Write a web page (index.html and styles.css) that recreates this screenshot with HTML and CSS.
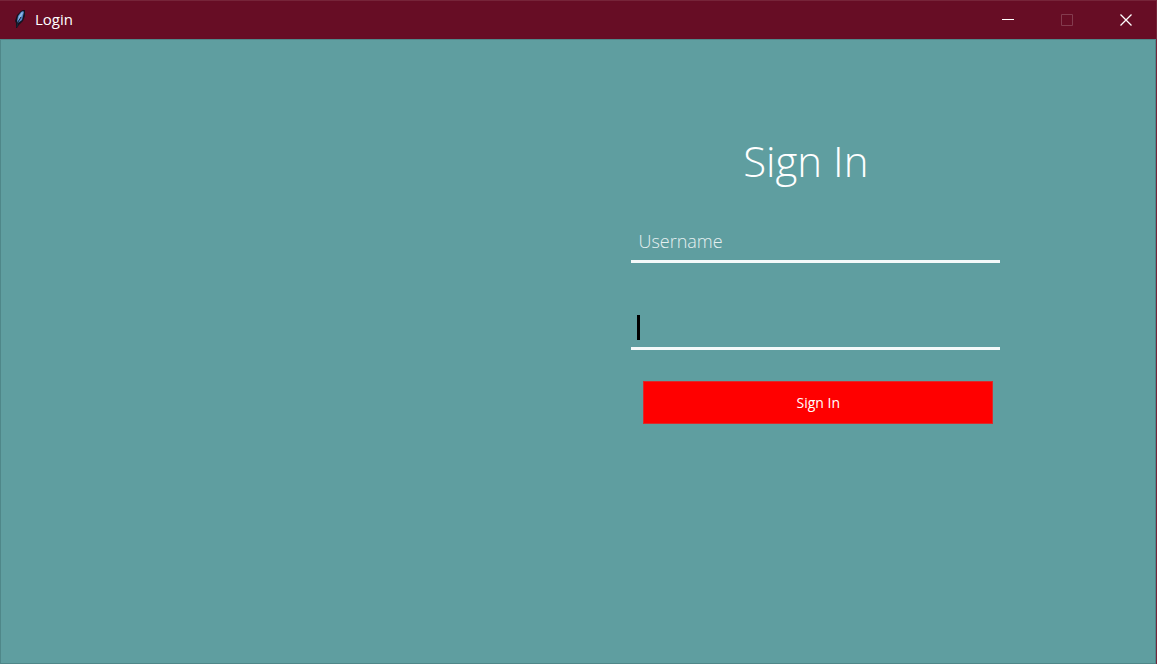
FILE: index.html
```html
<!DOCTYPE html>
<html lang="en">
<head>
<meta charset="utf-8">
<meta name="viewport" content="width=device-width, initial-scale=1">
<title>Login</title>
<link rel="stylesheet" href="styles.css">
</head>
<body>
<div class="window">
  <header class="titlebar">
    <svg class="feather" viewBox="0 0 12 20" aria-hidden="true">
      <path d="M9 1 L11 1 L11 7 L9 12 L5 16 L3 19 L2 19 L2 14 L1 12 L3 6 L7 2 Z" fill="#14141f"/>
      <path d="M9 2 L10 3 L9 7 L8 11 L4 14 L3 12 L4 7 L7 3 Z" fill="#4f83c4"/>
      <path d="M8 3 L9 4 L6 10 L4 11 L5 7 Z" fill="#8fbbe6"/>
      <path d="M7 8 L4 13 L3 18" fill="none" stroke="#182238"/>
    </svg>
    <span class="caption">Login</span>
    <div class="controls">
      <button class="control" type="button" aria-label="Minimize">
        <svg class="glyph" viewBox="0 0 12 12"><path d="M0 5.5H12"/></svg>
      </button>
      <button class="control" type="button" aria-label="Maximize" disabled>
        <svg class="glyph" viewBox="0 0 12 12"><path d="M.5 .5H11.5V11.5H.5Z"/></svg>
      </button>
      <button class="control" type="button" aria-label="Close">
        <svg class="glyph close" viewBox="0 0 12 12"><path d="M.5 .5L11.5 11.5M11.5 .5L.5 11.5"/></svg>
      </button>
    </div>
  </header>
  <main class="client">
    <form class="login">
      <h1 class="heading">Sign In</h1>
      <div class="field">
        <input class="entry" type="text" aria-label="Username" value="Username">
      </div>
      <div class="field">
        <input class="entry" type="password" aria-label="Password">
        <span class="caret"></span>
      </div>
      <button class="submit" type="button">Sign In</button>
    </form>
  </main>
</div>
</body>
</html>
```
FILE: styles.css
```css
* {
  box-sizing: border-box;
}

body {
  margin: 0;
  font-family: "Open Sans", "Noto Sans", sans-serif;
  color: #fff;
}

.window {
  display: flex;
  flex-direction: column;
  min-height: 100vh;
  border-top: 1px solid #762439;
  border-right: 1px solid #762439;
  background: #670d25;
}

.titlebar {
  display: flex;
  align-items: center;
  height: 38px;
  padding: 0 1px 2px 14px;
}

.feather {
  width: 12px;
  height: 20px;
}

.caption {
  margin-left: 9px;
  font-size: 15px;
  line-height: 20px;
}

.controls {
  display: flex;
  align-self: stretch;
  margin-left: auto;
}

.control {
  display: grid;
  place-items: center;
  width: 59px;
  padding: 2px 0 0;
  border: 0;
  background: transparent;
  color: #fff;
}

.control:disabled {
  color: #843b4e;
}

.glyph {
  width: 12px;
  height: 12px;
  fill: none;
  stroke: currentColor;
  overflow: visible;
}

.close {
  stroke-width: 1.3;
}

.client {
  flex: 1;
  display: grid;
  grid-template-columns: 631fr 369fr 155fr;
  align-items: start;
  border: 1px solid #4f8789;
  background: #5f9ea0;
}

.login {
  grid-column: 2;
  display: flex;
  flex-direction: column;
  padding-top: 91px;
}

.heading {
  margin: 0 20px 32px 0;
  font-size: 42px;
  font-weight: 350;
  line-height: 60px;
  text-align: center;
}

.field {
  position: relative;
  height: 40px;
  margin-bottom: 47px;
  border-bottom: 3px solid #f4f9f9;
}

.field + .submit {
  margin-top: -16px;
}

.entry {
  display: block;
  width: 100%;
  height: 35px;
  padding: 0 7px;
  border: 0;
  outline: 0;
  background: transparent;
  color: #e6f0f0;
  font-family: inherit;
  font-size: 18px;
  font-weight: 350;
}

.caret {
  position: absolute;
  left: 6px;
  top: 5px;
  width: 3px;
  height: 25px;
  background: #000;
}

.submit {
  height: 43px;
  margin: 0 7px 0 12px;
  padding: 0;
  border: 1px solid #d92c2c;
  background: #f00;
  color: #fff;
  font-family: inherit;
  font-size: 14px;
}
```
